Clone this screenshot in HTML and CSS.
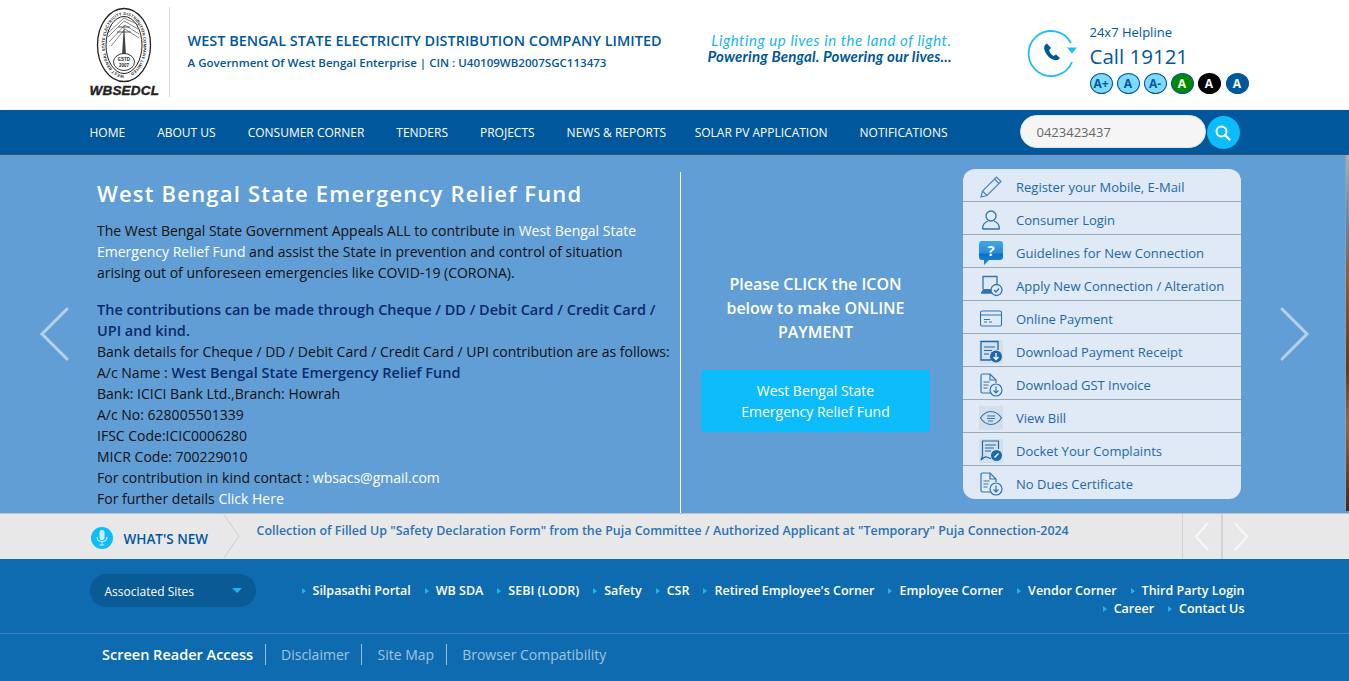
FILE: index.html
```html
<!DOCTYPE html>
<html lang="en">
<head>
  <meta charset="UTF-8">
  <meta name="viewport" content="width=device-width, initial-scale=1.0">
  <title>WBSEDCL</title>
  <link rel="stylesheet" href="styles.css">
</head>
<body>

  <svg class="sprite" width="0" height="0">
    <symbol id="doc-down" viewBox="0 0 24 24">
      <path d="M13 20H3.500A1.500 1.500 0 0 1 2 18.500V2.500A1.500 1.500 0 0 1 3.500 1H11l6 6v3" fill="none" stroke="#2f74b0" stroke-width="1.2"/>
      <path d="M11 1v6h6" fill="none" stroke="#2f74b0" stroke-width="1.2"/>
      <path d="M4.500 9h6M4.500 12h5M4.500 15h4" stroke="#2f74b0" stroke-width="1.200"/>
      <circle cx="17" cy="17" r="6" fill="#dfeaf6" stroke="#2f74b0" stroke-width="1.200"/>
      <path d="M17 13.500v6.500M14.500 17.500L17 20l2.500-2.500" fill="none" stroke="#2f74b0" stroke-width="1.200"/>
    </symbol>
  </svg>

  <header class="top">
    <div class="wrap top-inner">
      <div class="logo">
        <svg class="logo-seal" width="56" height="76" viewBox="0 0 56 76">
          <defs>
            <path id="sealRing" d="M28 68A19.500 30 0 1 1 28.100 68"/>
          </defs>
          <ellipse cx="28" cy="38" rx="26.500" ry="36.500" fill="#fff" stroke="#222" stroke-width="1.300"/>
          <ellipse cx="28" cy="38" rx="18" ry="28.500" fill="#fff" stroke="#222" stroke-width="1"/>
          <text class="seal-ring"><textPath href="#sealRing">WEST BENGAL STATE ELECTRICITY DISTRIBUTION COMPANY LIMITED</textPath></text>
          <path d="M12 30L28 14L42 22M12 26L28 11L43 18M13 35L29 18L43 27M15 39L29 22L43 31" fill="none" stroke="#555" stroke-width=".7"/>
          <path d="M26 48L28 16L30 48z" fill="#444"/>
          <path d="M22 20h12M21 25h14" stroke="#333" stroke-width=".8"/>
          <ellipse cx="28" cy="55" rx="10.500" ry="8.500" fill="#fff" stroke="#222" stroke-width=".9"/>
          <text class="seal-year" x="28" y="53.500" text-anchor="middle">ESTD</text>
          <text class="seal-year" x="28" y="60" text-anchor="middle">2007</text>
        </svg>
        <div class="logo-word">WBSEDCL</div>
      </div>
      <div class="title">
        <h1>WEST BENGAL STATE ELECTRICITY DISTRIBUTION COMPANY LIMITED</h1>
        <p>A Government Of West Bengal Enterprise | CIN : U40109WB2007SGC113473</p>
      </div>
      <div class="tagline">
        <div class="tag-a">Lighting up lives in the land of light.</div>
        <div class="tag-b">Powering Bengal. Powering our lives...</div>
      </div>
      <div class="helpline">
        <svg class="help-icon" width="50" height="48" viewBox="0 0 50 48">
          <path d="M44 14A22.500 22.500 0 1 0 45 33" fill="none" stroke="#1ebcf5" stroke-width="1.800"/>
          <path d="M40 18.500h10l-5 6z" fill="#1ebcf5"/>
          <path d="M20 14.500c-2 1-3.500 3-2.500 6.500 1.500 5 5.500 9 10 10 3 .7 4.500-.5 5.500-2l-4-3.500-2.500 1.500c-2-1-4-3.500-4.500-6l2-2z" fill="#01579b"/>
        </svg>
        <div class="help-text">
          <div class="help-label">24x7 Helpline</div>
          <div class="help-call">Call 19121</div>
          <div class="sizes">
            <span class="size">A+</span>
            <span class="size">A</span>
            <span class="size">A-</span>
            <span class="size size-green">A</span>
            <span class="size size-black">A</span>
            <span class="size size-blue">A</span>
          </div>
        </div>
      </div>
    </div>
  </header>

  <nav class="nav">
    <div class="wrap nav-inner">
      <ul class="menu">
        <li>HOME</li>
        <li>ABOUT US</li>
        <li>CONSUMER CORNER</li>
        <li>TENDERS</li>
        <li>PROJECTS</li>
        <li>NEWS &amp; REPORTS</li>
        <li class="menu-tight">SOLAR PV APPLICATION</li>
        <li>NOTIFICATIONS</li>
      </ul>
      <div class="search">
        <input class="search-box" type="text" value="0423423437">
        <button class="search-btn" aria-label="Search">
          <svg width="18" height="18" viewBox="0 0 18 18"><circle cx="7.500" cy="7.500" r="5" fill="none" stroke="#fff" stroke-width="2"/><path d="M11 11l4.500 4.500" stroke="#fff" stroke-width="2.200" stroke-linecap="round"/></svg>
        </button>
      </div>
    </div>
  </nav>

  <section class="slider">
    <div class="slide">
      <svg class="arrow arrow-prev" width="32" height="56" viewBox="0 0 32 56"><path d="M29 3L4 28l25 25" fill="none" stroke="#b3d0ec" stroke-width="3" stroke-linecap="round"/></svg>
      <svg class="arrow arrow-next" width="32" height="56" viewBox="0 0 32 56"><path d="M3 3l25 25L3 53" fill="none" stroke="#b3d0ec" stroke-width="3" stroke-linecap="round"/></svg>
      <div class="wrap slide-inner">
        <div class="relief">
          <h2>West Bengal State Emergency Relief Fund</h2>
          <p class="intro">The West Bengal State Government Appeals ALL to contribute in <a>West Bengal State</a><br><a>Emergency Relief Fund</a> and assist the State in prevention and control of situation<br>arising out of unforeseen emergencies like COVID-19 (CORONA).</p>
          <p class="lead">The contributions can be made through Cheque / DD / Debit Card / Credit Card /<br>UPI and kind.</p>
          <p>Bank details for Cheque / DD / Debit Card / Credit Card / UPI contribution are as follows:</p>
          <p>A/c Name : <b>West Bengal State Emergency Relief Fund</b></p>
          <p>Bank: ICICI Bank Ltd.,Branch: Howrah</p>
          <p>A/c No: 628005501339</p>
          <p>IFSC Code:ICIC0006280</p>
          <p>MICR Code: 700229010</p>
          <p>For contribution in kind contact : <a>wbsacs@gmail.com</a></p>
          <p>For further details <a>Click Here</a></p>
        </div>
        <div class="pay">
          <div class="pay-text">Please CLICK the ICON below to make ONLINE PAYMENT</div>
          <a class="pay-btn">West Bengal State<br>Emergency Relief Fund</a>
        </div>
        <ul class="quick">
          <li>
            <span class="quick-icon"><svg width="24" height="24" viewBox="0 0 24 24"><path d="M2 22l1.500-6L17.500 2l4.500 4.500L8 20.500z M3.500 16L8 20.500 M15.500 4l4.500 4.500" fill="none" stroke="#4a86bd" stroke-width="1.200"/></svg></span>
            Register your Mobile, E-Mail
          </li>
          <li>
            <span class="quick-icon"><svg width="24" height="24" viewBox="0 0 24 24"><circle cx="12" cy="8" r="5" fill="none" stroke="#2f74b0" stroke-width="1.300"/><path d="M3.500 21c0-5 3-7 5.500-8M20.500 21c0-5-3-7-5.500-8M3.500 21h17" fill="none" stroke="#2f74b0" stroke-width="1.300"/></svg></span>
            Consumer Login
          </li>
          <li>
            <span class="quick-icon"><svg width="24" height="24" viewBox="0 0 24 24"><defs><linearGradient id="bubble" x1="0" y1="0" x2="0" y2="1"><stop offset="0" stop-color="#43a5e8"/><stop offset=".5" stop-color="#2a8bd8"/><stop offset=".55" stop-color="#0f6fc4"/><stop offset="1" stop-color="#1a8ee0"/></linearGradient></defs><path d="M3 0h18a3 3 0 0 1 3 3v13a3 3 0 0 1-3 3H10l-5 5v-5H3a3 3 0 0 1-3-3V3a3 3 0 0 1 3-3z" fill="url(#bubble)"/><text class="bubble-q" x="12" y="15" text-anchor="middle">?</text></svg></span>
            Guidelines for New Connection
          </li>
          <li>
            <span class="quick-icon"><svg width="24" height="24" viewBox="0 0 24 24"><path d="M4 15V2.500h14V11" fill="none" stroke="#2f74b0" stroke-width="1.300"/><path d="M2 19l2-4h10v4z" fill="#2f74b0"/><path d="M2 19h11" stroke="#2f74b0" stroke-width="1.500"/><circle cx="17.500" cy="16" r="5.500" fill="#dfeaf6" stroke="#2f74b0" stroke-width="1.300"/><path d="M15 16l2 2 3-3.500" fill="none" stroke="#2f74b0" stroke-width="1.300"/></svg></span>
            Apply New Connection / Alteration
          </li>
          <li>
            <span class="quick-icon"><svg width="24" height="24" viewBox="0 0 24 24"><rect x="1.500" y="4" width="21" height="15" rx="1.500" fill="none" stroke="#2f74b0" stroke-width="1.100"/><path d="M1.500 8h21" stroke="#2f74b0" stroke-width="1.100"/><path d="M5 12.500h6M5 15h3M10 15h3" stroke="#2f74b0" stroke-width="1"/></svg></span>
            Online Payment
          </li>
          <li>
            <span class="quick-icon quick-icon-shade"><svg width="24" height="24" viewBox="0 0 24 24"><path d="M12 20H2V1.500h17V10" fill="none" stroke="#1d68a8" stroke-width="1.300"/><path d="M5 7h11M5 10.500h8M5 14h5" stroke="#1d68a8" stroke-width="1.200"/><circle cx="17" cy="16.500" r="6" fill="#1d68a8"/><path d="M17 13v6M14.500 17L17 19.500l2.500-2.500" fill="none" stroke="#fff" stroke-width="1.300"/></svg></span>
            Download Payment Receipt
          </li>
          <li>
            <span class="quick-icon"><svg width="24" height="24"><use href="#doc-down"/></svg></span>
            Download GST Invoice
          </li>
          <li>
            <span class="quick-icon quick-icon-shade"><svg width="24" height="24" viewBox="0 0 24 24"><path d="M1.500 12c3-4.500 6-6.500 10.500-6.500S19.500 7.500 22.500 12c-3 4.500-6 6.500-10.500 6.500S4.500 16.500 1.500 12z" fill="none" stroke="#2f74b0" stroke-width="1.200"/><path d="M8 10h8M8 12.500h8M9 15h5" stroke="#2f74b0" stroke-width="1"/></svg></span>
            View Bill
          </li>
          <li>
            <span class="quick-icon quick-icon-shade"><svg width="24" height="24" viewBox="0 0 24 24"><path d="M19.500 10V2H3.500v14c0 2-1 3.500-1.500 5 2-2 3.500-3.500 5.500-3 1.500.5 3 2 4.500 1" fill="none" stroke="#1d68a8" stroke-width="1.200"/><path d="M6 6h11M6 9h9M6 12h6" stroke="#1d68a8" stroke-width="1.100"/><circle cx="17.500" cy="16.500" r="5.500" fill="#1d68a8"/><path d="M15.500 18.500l4-4" stroke="#fff" stroke-width="1.500"/></svg></span>
            Docket Your Complaints
          </li>
          <li>
            <span class="quick-icon"><svg width="24" height="24"><use href="#doc-down"/></svg></span>
            No Dues Certificate
          </li>
        </ul>
      </div>
    </div>
    <div class="slide-peek"></div>
  </section>

  <section class="news">
    <div class="wrap news-inner">
      <div class="news-head">
        <span class="mic">
          <svg width="12" height="16" viewBox="0 0 12 16"><rect x="3.500" y="0" width="5" height="10" rx="2.500" fill="#cfeefc"/><path d="M1 7c0 3 2 4.500 5 4.500S11 10 11 7M6 11.500V15M3.500 15h5" fill="none" stroke="#cfeefc" stroke-width="1.100"/></svg>
        </span>
        <span class="news-label">WHAT'S NEW</span>
        <svg class="news-tip" width="18" height="45" viewBox="0 0 18 45"><path d="M1 1l15 21L1 44" fill="none" stroke="#cfcfcf" stroke-width="1"/></svg>
      </div>
      <div class="news-text">Collection of Filled Up "Safety Declaration Form" from the Puja Committee / Authorized Applicant at "Temporary" Puja Connection-2024</div>
      <div class="news-nav">
        <span class="news-btn"><svg width="16" height="29" viewBox="0 0 16 29"><path d="M14 1L2 14.500 14 28" fill="none" stroke="#f7f7f7" stroke-width="2"/></svg></span>
        <span class="news-btn"><svg width="16" height="29" viewBox="0 0 16 29"><path d="M2 1l12 13.500L2 28" fill="none" stroke="#f7f7f7" stroke-width="2"/></svg></span>
      </div>
    </div>
  </section>

  <footer class="foot">
    <div class="wrap foot-top">
      <div class="sites"><span class="sites-label">Associated Sites</span><span class="caret"></span></div>
      <ul class="foot-links">
        <li>Silpasathi Portal</li>
        <li>WB SDA</li>
        <li>SEBI (LODR)</li>
        <li>Safety</li>
        <li>CSR</li>
        <li>Retired Employee's Corner</li>
        <li>Employee Corner</li>
        <li>Vendor Corner</li>
        <li>Third Party Login</li>
        <li>Career</li>
        <li>Contact Us</li>
      </ul>
    </div>
    <div class="foot-bottom">
      <ul class="wrap legal">
        <li class="legal-main">Screen Reader Access</li>
        <li>Disclaimer</li>
        <li>Site Map</li>
        <li>Browser Compatibility</li>
      </ul>
    </div>
  </footer>

</body>
</html>
```

FILE: styles.css
```css
* {
  box-sizing: border-box;
}

html, body {
  margin: 0;
  padding: 0;
  overflow: hidden;
}

body {
  font-family: 'Open Sans', sans-serif;
  font-size: 14px;
  color: #222;
  background: #fff;
}

ul {
  list-style: none;
  margin: 0;
  padding: 0;
}

.sprite {
  position: absolute;
}

.wrap {
  width: 1170px;
  margin: 0 auto;
}

/* header */
.top {
  height: 110px;
  background: #fff;
}

.top-inner {
  display: flex;
  height: 110px;
}

.logo {
  width: 80px;
  height: 90px;
  margin-top: 7px;
  border-right: 1px solid #dcdcdc;
  padding-right: 9px;
}

.logo-seal {
  display: block;
  margin-left: 6px;
}

.logo-word {
  font-family: 'Liberation Sans', sans-serif;
  font-size: 13.500px;
  line-height: 15px;
  font-weight: bold;
  font-style: italic;
  letter-spacing: .2px;
  -webkit-text-stroke: .4px #222;
  color: #222;
  white-space: nowrap;
}

.seal-ring {
  font-family: 'Liberation Sans', sans-serif;
  font-size: 4px;
  font-weight: bold;
  letter-spacing: .2px;
  fill: #222;
}

.seal-year {
  font-family: 'Liberation Sans', sans-serif;
  font-size: 4.500px;
  font-weight: bold;
  fill: #222;
}

.title {
  width: 520px;
  margin-left: 18px;
  padding-top: 31px;
  color: #01579b;
}

.title h1 {
  margin: 0;
  font-size: 14.480px;
  line-height: 20px;
  font-weight: 600;
  white-space: nowrap;
}

.title p {
  margin: 3px 0 0;
  font-size: 11.550px;
  line-height: 18px;
  font-weight: 600;
  white-space: nowrap;
}

.tagline {
  width: 244px;
  padding-top: 32px;
  font-family: 'Lato', sans-serif;
  font-style: italic;
  font-size: 15px;
  line-height: 16px;
  text-align: right;
  white-space: nowrap;
}

.tag-a {
  color: #1cb5ea;
  letter-spacing: .55px;
}

.tag-b {
  color: #01579b;
  font-weight: bold;
  letter-spacing: .18px;
}

.helpline {
  display: flex;
  margin-left: 75px;
  padding-top: 23px;
}

.help-icon {
  margin-top: 6px;
  margin-right: 13px;
}

.help-label {
  font-size: 13px;
  line-height: 18px;
  color: #01579b;
}

.help-call {
  font-size: 20.500px;
  line-height: 28px;
  margin-top: 1px;
  color: #01579b;
}

.sizes {
  display: flex;
  gap: 4px;
  margin-top: 3px;
}

.size {
  width: 23px;
  height: 21px;
  border-radius: 50%;
  border: 1px solid #01579b;
  background: #7edbff;
  color: #01579b;
  font-size: 12px;
  line-height: 19px;
  font-weight: bold;
  text-align: center;
}

.size-green {
  background: #008a00;
  color: #fff;
}

.size-black {
  background: #000;
  border-color: #000;
  color: #fff;
}

.size-blue {
  margin-left: 1px;
  background: #01579b;
  color: #fff;
}

/* nav */
.nav {
  position: relative;
  height: 45px;
  background: #01579b;
  border-bottom: 1px solid #38506a;
  box-shadow: 0 2px 5px rgba(0, 0, 0, .2);
}

.nav-inner {
  display: flex;
  align-items: flex-start;
}

.menu {
  display: flex;
  gap: 32px;
  width: 930px;
  padding-top: 14px;
}

.menu li {
  color: #fff;
  font-size: 12px;
  line-height: 18px;
  white-space: nowrap;
}

.menu .menu-tight {
  margin-left: -3.500px;
}

.search {
  display: flex;
  gap: 1px;
  padding-top: 5px;
}

.search-box {
  width: 186px;
  height: 33px;
  padding: 0 16px;
  border: 1px solid #e4e4e4;
  border-radius: 17px;
  background: #f6f5f5;
  font-family: 'Open Sans', sans-serif;
  font-size: 13px;
  color: #666;
}

.search-btn {
  width: 33px;
  height: 33px;
  margin-top: 1px;
  padding: 0;
  border: none;
  border-radius: 50%;
  background: #0dbcfb;
  display: flex;
  align-items: center;
  justify-content: center;
}

/* slider */
.slider {
  position: relative;
  height: 359px;
}

.slide {
  position: relative;
  height: 359px;
  background: #619ed6;
  border-bottom: 1px solid #b5c4d3;
}

.slide-peek {
  position: absolute;
  top: 0;
  right: 0;
  bottom: 3px;
  width: 4px;
  background: linear-gradient(#9db4b8 0, #5f8cae 18%, #8a5c3a 35%, #5b3a24 60%, #8c6a4c 75%, #3a2a20 100%);
  border-left: 1px solid #8aa0b0;
}

.arrow {
  position: absolute;
  top: 151px;
}

.arrow-prev {
  left: 38px;
}

.arrow-next {
  left: 1279px;
}

.slide-inner {
  display: flex;
  align-items: flex-start;
}

.relief {
  width: 591.500px;
  height: 341px;
  margin-top: 17px;
  padding: 6px 0 0 7.500px;
  border-right: 1px solid #fff;
  line-height: 21px;
  color: #111;
  white-space: nowrap;
}

.relief h2 {
  margin: 0 0 12px;
  font-size: 22px;
  line-height: 30px;
  font-weight: 600;
  letter-spacing: 1.200px;
  color: #fff;
}

.relief p {
  margin: 0;
}

.relief a {
  color: #fff;
}

.relief b {
  color: #0b2a6b;
  font-size: 14.500px;
  font-weight: 600;
}

.relief .intro {
  margin-bottom: 16px;
}

.relief .lead {
  color: #0b2a6b;
  font-size: 14.500px;
  font-weight: 600;
}

.pay {
  width: 229px;
  margin-left: 20px;
  padding-top: 117px;
  text-align: center;
  color: #fff;
}

.pay-text {
  padding: 0 20px;
  font-size: 16px;
  line-height: 24px;
  font-weight: 600;
}

.pay-btn {
  display: block;
  margin-top: 26px;
  padding: 10px 0;
  border-radius: 4px;
  background: #0dbcfb;
  font-size: 14px;
  line-height: 21px;
}

.quick {
  width: 278px;
  margin-top: 14px;
  margin-left: 33px;
  border-radius: 12px;
  background: #dfeaf6;
  overflow: hidden;
}

.quick li {
  display: flex;
  align-items: center;
  height: 33px;
  padding-top: 3px;
  padding-left: 16px;
  border-bottom: 1px solid #9aa9b8;
  color: #1d68a8;
  font-size: 13px;
}

.quick li:last-child {
  border-bottom-color: transparent;
}

.quick-icon {
  display: flex;
  width: 24px;
  height: 24px;
  margin-right: 13px;
}

.quick-icon-shade {
  background: #d3e0ec;
}

.bubble-q {
  font-family: 'Open Sans', sans-serif;
  font-size: 15px;
  font-weight: bold;
  fill: #fff;
}

/* news bar */
.news {
  height: 45px;
  background: #e8e8e8;
}

.news-inner {
  display: flex;
  height: 45px;
}

.news-head {
  display: flex;
  align-items: center;
  width: 167px;
}

.mic {
  display: flex;
  align-items: center;
  justify-content: center;
  flex-shrink: 0;
  width: 22px;
  height: 22px;
  margin: 3px 11px 0 1px;
  border-radius: 50%;
  background: #0dbcfb;
}

.news-label {
  width: 99px;
  padding-top: 5px;
  font-size: 13.500px;
  font-weight: 600;
  color: #01579b;
  white-space: nowrap;
}

.news-tip {
  flex-shrink: 0;
}

.news-text {
  flex: 1;
  padding-top: 7px;
  font-size: 12.460px;
  line-height: 19px;
  font-weight: 600;
  color: #2a72b5;
  white-space: nowrap;
}

.news-nav {
  display: flex;
}

.news-btn {
  display: flex;
  align-items: center;
  justify-content: center;
  width: 39px;
  height: 45px;
  border-left: 1px solid #d2d2d2;
}

.news-btn + .news-btn {
  border-left-width: 2px;
}

/* footer */
.foot {
  height: 122px;
  background: #0e6bb0;
}

.foot-top {
  display: flex;
  justify-content: space-between;
  height: 74px;
  padding-top: 15px;
  padding-right: 15px;
}

.sites {
  display: flex;
  align-items: center;
  justify-content: space-between;
  width: 166px;
  height: 33px;
  padding: 0 14px 0 15px;
  border-radius: 17px;
  background: #0a5a96;
  color: #fff;
  font-size: 12px;
}

.sites-label {
  padding-top: 2px;
}

.caret {
  border-left: 5px solid transparent;
  border-right: 5px solid transparent;
  border-top: 5px solid #1cb5ea;
}

.foot-links {
  display: flex;
  flex-wrap: wrap;
  align-content: flex-start;
  justify-content: flex-end;
  width: 960px;
  column-gap: 14px;
  padding-top: 8px;
}

.foot-links li {
  display: flex;
  align-items: center;
  color: #fff;
  font-size: 12.500px;
  line-height: 18px;
  font-weight: 600;
  white-space: nowrap;
}

.foot-links li::before {
  content: "";
  margin-right: 7px;
  border-top: 3.500px solid transparent;
  border-bottom: 3.500px solid transparent;
  border-left: 4px solid #1cb5ea;
}

.foot-bottom {
  height: 48px;
  border-top: 1px solid #3a85bf;
  padding-top: 10px;
}

.legal {
  display: flex;
  padding-left: 12.500px;
}

.legal li {
  height: 21px;
  padding: 0 12px 0 15px;
  border-left: 1px solid #9fc0dc;
  font-size: 14px;
  line-height: 21px;
  color: #a3c3df;
  white-space: nowrap;
}

.legal .legal-main {
  padding-left: 0;
  border-left: none;
  color: #fff;
  font-weight: 600;
  font-size: 14.500px;
}
```
